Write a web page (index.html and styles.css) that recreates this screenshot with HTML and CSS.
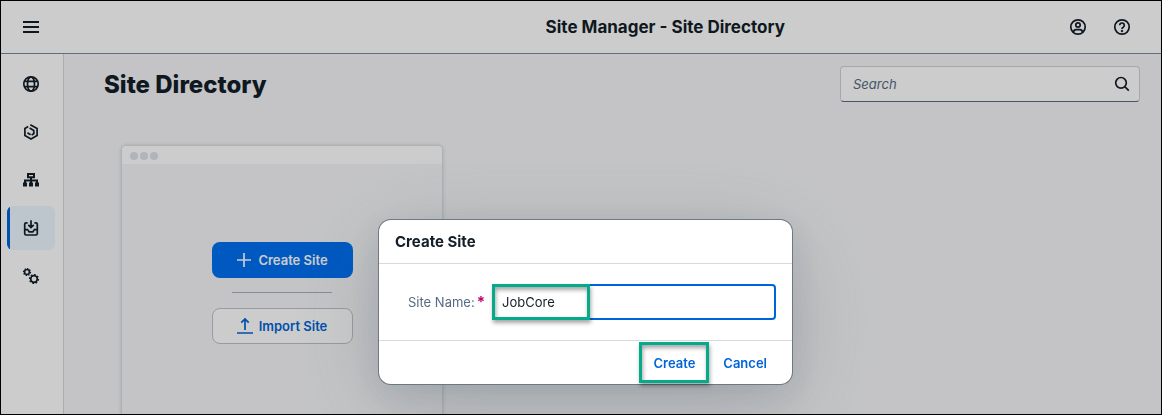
FILE: index.html
```html
<!DOCTYPE html>
<html lang="en">
<head>
<meta charset="utf-8">
<title>Site Manager - Site Directory</title>
<link rel="stylesheet" href="styles.css">
</head>
<body>
<div class="app">
  <header class="shell-bar">
    <button class="icon-button" aria-label="Toggle navigation">
      <svg class="icon icon-heavy" viewBox="0 0 16 16"><path d="M0 3h16M0 8h16M0 13h16"/></svg>
    </button>
    <h1 class="shell-title">Site Manager - Site Directory</h1>
    <div class="shell-actions">
      <button class="icon-button" aria-label="Account">
        <svg class="icon" viewBox="0 0 16 16"><circle cx="8" cy="8" r="7.2"/><circle cx="8" cy="6" r="2.200"/><path d="M3.600 13c.2-1.700 1-2.400 2.400-2.400h4c1.400 0 2.200.7 2.400 2.400"/></svg>
      </button>
      <button class="icon-button" aria-label="Help">
        <svg class="icon" viewBox="0 0 16 16"><circle cx="8" cy="8" r="7.2"/><path d="M5.700 6.300a2.300 2.300 0 1 1 3.500 2C8.300 8.800 8 9.100 8 10"/><circle class="solid" cx="8" cy="12" r=".4"/></svg>
      </button>
    </div>
  </header>
  <div class="body">
    <nav class="side-nav" aria-label="Main">
      <button class="nav-item" aria-label="Channel Manager">
        <svg class="icon" viewBox="0 0 16 16"><circle cx="8" cy="8" r="7.2"/><ellipse cx="8" cy="8" rx="3.500" ry="7.200"/><path d="M1.600 5.300h12.800M1.600 10.700h12.800"/></svg>
      </button>
      <button class="nav-item" aria-label="Content Manager">
        <svg class="icon" viewBox="0 0 16 16"><path d="M5.200 2.600 1.900 4.600v6.900L8 15l6.100-3.500V4.600L7.300.7M6.600 4l4.200 2.400v3.300L8.600 11M4.400 8.800l3.200 1.900"/></svg>
      </button>
      <button class="nav-item" aria-label="Site structure">
        <svg class="icon icon-heavy" viewBox="0 0 16 16"><path d="M5 1.900h6v3.400H5zM8 5.300V11M2 11V8.400h12V11"/><path class="solid" d="M1 11.600h2v2H1zM7 11.600h2v2H7zM13 11.600h2v2h-2z"/></svg>
      </button>
      <button class="nav-item nav-item-selected" aria-label="Site Directory" aria-current="page">
        <svg class="icon" viewBox="0 0 16 16"><path d="M4.600 2.800H3.200C2.200 2.800 1.700 3.300 1.700 4.300v9.200c0 1 .5 1.500 1.500 1.500h9.600c1 0 1.500-.5 1.500-1.500V4.300c0-1-.5-1.500-1.500-1.500h-1.400M8 .3v7M5.300 4.800 8 7.500l2.700-2.700M1.700 9.600h2.800L6.200 11.900h3.600l1.700-2.300h2.800"/></svg>
      </button>
      <button class="nav-item" aria-label="Settings">
        <svg class="icon" viewBox="0 0 16 16"><circle cx="4" cy="4" r="2.500"/><circle class="teeth" cx="4" cy="4" r="3.400" pathLength="16"/><circle cx="11" cy="11" r="3.300"/><circle class="teeth" cx="11" cy="11" r="4.400" pathLength="16"/></svg>
      </button>
    </nav>
    <main class="content">
      <div class="content-head">
        <h2 class="page-title">Site Directory</h2>
        <div class="search">
          <input class="search-input" type="search" placeholder="Search" aria-label="Search">
          <button class="search-button" aria-label="Run search">
            <svg class="icon" viewBox="0 0 16 16"><circle cx="7" cy="6.800" r="5.300"/><path d="m11 10.800 3.800 3.800"/></svg>
          </button>
        </div>
      </div>
      <section class="site-tile" aria-label="New site">
        <div class="tile-bar"><span class="dot"></span><span class="dot"></span><span class="dot"></span></div>
        <div class="tile-actions">
          <button class="button button-primary"><svg class="icon" viewBox="0 0 16 16"><path d="M8 1v14M1 8h14"/></svg>Create Site</button>
          <hr class="tile-rule">
          <button class="button button-outline"><svg class="icon" viewBox="0 0 16 16"><path d="M8 12V1M4.300 4.700 8 1l3.700 3.700M0 15h16"/></svg>Import Site</button>
        </div>
      </section>
    </main>
  </div>
</div>
<div class="overlay">
  <form class="dialog" role="dialog" aria-labelledby="dialog-title">
    <h2 class="dialog-title" id="dialog-title">Create Site</h2>
    <div class="dialog-body">
      <label class="field-label" for="site-name">Site Name:<span class="required">*</span></label>
      <div class="field">
        <input class="field-input" id="site-name" type="text" value="JobCore" required>
        <span class="marker marker-field"></span>
      </div>
    </div>
    <div class="dialog-footer">
      <button class="link-button" type="button">Create<span class="marker marker-button"></span></button>
      <button class="link-button" type="button">Cancel</button>
    </div>
  </form>
</div>
</body>
</html>
```
FILE: styles.css
```css
* { box-sizing: border-box; }

body {
  margin: 0;
  font-family: Inter, "Liberation Sans", sans-serif;
  font-size: 13px;
  color: #131e29;
  overflow: hidden;
}

button, input { font: inherit; color: inherit; }
button { border: 0; padding: 0; background: none; }
h1, h2 { margin: 0; }

.app {
  display: flex;
  flex-direction: column;
  height: 100vh;
  border: 1px solid #000;
  background: #f5f6f8;
  overflow: hidden;
}

.icon {
  display: block;
  width: 16px;
  height: 16px;
  fill: none;
  stroke: currentColor;
  stroke-width: 1.7;
  overflow: visible;
}
.icon-heavy { stroke-width: 2; }
.icon .solid { fill: currentColor; }
.icon .teeth { stroke-width: 1.4; stroke-dasharray: 1 1; }

.shell-bar {
  display: grid;
  grid-template-columns: 3fr auto 2fr;
  align-items: center;
  flex: none;
  height: 53px;
  padding: 0 21px 0 12px;
  border-bottom: 1px solid #738ba0;
  background: #fff;
}
.icon-button {
  display: grid;
  place-items: center;
  width: 36px;
  height: 36px;
}
.shell-title { font-size: 17px; font-weight: 700; }
.shell-actions { display: flex; justify-content: flex-end; gap: 8px; }

.body { display: flex; flex: 1; min-height: 0; }
.side-nav {
  display: flex;
  flex-direction: column;
  flex: none;
  gap: 4px;
  width: 63px;
  padding: 8px 8px 0 6px;
  border-right: 1px solid #d9d9d9;
  background: #fff;
}
.nav-item {
  display: grid;
  place-items: center;
  height: 44px;
  border-radius: 6px;
}
.nav-item-selected {
  background: linear-gradient(to right, #0064d9 3px, #ebf8ff 3px);
}

.content { flex: 1; padding: 12px 21px 0 40px; }
.content-head { display: flex; justify-content: space-between; align-items: center; }
.page-title { font-size: 24px; font-weight: 800; }
.search {
  display: flex;
  align-items: center;
  width: 300px;
  height: 36px;
  border: 1px solid #d0d4d8;
  border-bottom-color: #556b81;
  border-radius: 4px;
  background: #fff;
}
.search-input {
  flex: 1;
  min-width: 0;
  padding: 0 12px;
  border: 0;
  outline: 0;
  background: none;
}
.search-input::placeholder { color: #556b82; font-style: italic; opacity: 1; }
.search-button { display: grid; place-items: center; width: 34px; height: 34px; }

.site-tile {
  width: 320px;
  height: 400px;
  margin: 44px 0 0 18px;
  border-radius: 4px;
  background: #f5f6f8;
  box-shadow: 0 0 4px rgba(34, 53, 72, .3);
  overflow: hidden;
}
.tile-bar {
  display: flex;
  align-items: center;
  gap: 2px;
  height: 18px;
  padding: 2px 8px 0;
  background: #fff;
}
.dot { width: 8px; height: 8px; border-radius: 50%; background: #dde1ea; }
.tile-actions {
  display: flex;
  flex-direction: column;
  align-items: center;
  padding-top: 78px;
}
.button {
  display: flex;
  align-items: center;
  justify-content: center;
  gap: 6px;
  width: 141px;
  height: 36px;
  border-radius: 8px;
  font-weight: 600;
}
.button-primary { background: #0070f2; color: #fff; }
.button-outline { border: 1px solid #bcc3ca; background: #fff; color: #0064d9; }
.tile-rule { width: 100px; height: 1px; margin: 14px 0 15px; border: 0; background: #a3b1be; }

.overlay {
  position: fixed;
  inset: 0;
  display: flex;
  justify-content: center;
  align-items: flex-start;
  padding: 219px 0 0 9px;
  border: 1px solid #000;
  background: rgba(0, 0, 0, .2);
  overflow: hidden;
}
.dialog {
  width: 413px;
  border-radius: 12px;
  background: #fff;
  box-shadow: 0 0 0 1px #6c7882, 0 10px 30px rgba(34, 53, 72, .1), 0 20px 100px rgba(34, 53, 72, .2);
}
.dialog-title {
  display: flex;
  align-items: center;
  height: 44px;
  padding: 0 16px;
  border-bottom: 1px solid #d9d9d9;
  font-size: 15px;
  font-weight: 700;
}
.dialog-body {
  display: flex;
  align-items: center;
  padding: 20px 16px;
}
.field-label { width: 97px; padding-left: 13px; color: #556b82; white-space: nowrap; }
.required { margin-left: 2px; color: #ba066c; font-size: 15px; font-weight: 700; line-height: 1; }
.field { position: relative; flex: 1; }
.field-input {
  display: block;
  width: 100%;
  height: 36px;
  padding: 0 8px;
  border: 2px solid #0064d9;
  border-radius: 4px;
  outline: 0;
  background: #fff;
}
.marker {
  position: absolute;
  border: 3px solid #04ab8a;
  box-shadow: 1px 3px 4px rgba(0, 0, 0, .35), inset 1px 3px 4px rgba(0, 0, 0, .35);
  pointer-events: none;
}
.marker-field { top: 0; left: 0; width: 98px; height: 36px; }
.dialog-footer {
  display: flex;
  justify-content: flex-end;
  align-items: center;
  gap: 8px;
  height: 44px;
  padding: 0 15px;
  border-top: 1px solid #d9d9d9;
}
.link-button {
  position: relative;
  height: 36px;
  padding: 0 10px;
  color: #0064d9;
  font-weight: 600;
}
.marker-button { inset: -3px -4px -2px -4px; }
```
